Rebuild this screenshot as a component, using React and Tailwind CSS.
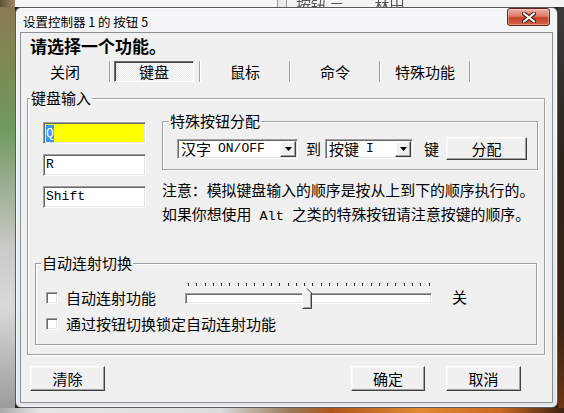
import React from 'react';

// classic 3D edges used by the dialog controls
const sunken =
  'border border-[#a0a0a0] border-r-white border-b-white shadow-[inset_1px_1px_0_#696969,inset_-1px_-1px_0_#e3e3e3]';
const raised =
  'border border-[#fff] border-r-[#404040] border-b-[#404040] shadow-[inset_-1px_-1px_0_#a0a0a0,inset_1px_1px_0_#f8f8f8]';
const etched = 'border border-[#a0a0a0] shadow-[inset_1px_1px_0_#fff,1px_1px_0_#fff]';
const mono = "font-['Liberation_Mono',monospace]";

const Separator = () => (
  <div className="w-[2px] h-[21px] border-l border-l-[#a0a0a0] border-r border-r-white" />
);

const Tab = ({ children }) => (
  <div className="w-[88px] h-[21px] flex items-center justify-center text-[15px] leading-[16px]">
    {children}
  </div>
);

const Combo = ({ className, children }) => (
  <div className={`${sunken} ${className} h-[20px] bg-white flex items-stretch p-[1px]`}>
    <div className="flex-1 flex items-center pl-[2px] whitespace-nowrap text-[15px] leading-[16px]">
      {children}
    </div>
    <div className={`${raised} w-[16px] bg-[#f0f0f0] flex items-center justify-center`}>
      <svg width="7" height="4" viewBox="0 0 7 4">
        <path d="M0 0h7L3.5 4z" fill="#000" />
      </svg>
    </div>
  </div>
);

const Button = ({ className, children }) => (
  <div
    className={`${raised} ${className} bg-[#f0f0f0] flex items-center justify-center text-[15px] leading-[16px]`}
  >
    {children}
  </div>
);

const Field = ({ className, children }) => (
  <div className={`${sunken} ${className} w-[103px] h-[22px] flex items-center px-[2px] ${mono} text-[13px]`}>
    {children}
  </div>
);

const Check = () => <div className={`${sunken} w-[12px] h-[12px] bg-white shrink-0`} />;

const Slider = () => {
  const ticks = Array.from({ length: 30 });
  return (
    <div className="relative w-[247px] h-[26px]">
      <div className="flex items-start justify-between pl-[3px] pr-[2px] h-[4px]">
        {ticks.map((_, i) => (
          <div key={i} className="w-[1px] h-[3px] bg-[#303030]" />
        ))}
      </div>
      <div className={`${sunken} mt-[6px] w-[247px] h-[11px] bg-white`} />
      <svg width="10" height="21" viewBox="0 0 10 21" className="absolute left-[117px] top-[5px]">
        <path d="M0.5 20.5V5L5 0.5 9.5 5v15.5z" fill="#f0f0f0" />
        <path d="M0.5 20V5L5 0.5" stroke="#fff" fill="none" />
        <path d="M5 0.5 9.5 5V20.5H0.5" stroke="#404040" fill="none" />
        <path d="M8.5 5.5V19.5H1.5" stroke="#a0a0a0" fill="none" />
      </svg>
    </div>
  );
};

const CloseButton = () => (
  <div className="w-[43px] h-[18px] rounded-[3px] border border-[#6b1e14] bg-[linear-gradient(180deg,#eab1a5_0%,#dc7a66_45%,#c6412b_55%,#d3654a_100%)] shadow-[inset_0_0_0_1px_rgba(255,255,255,0.35)] flex items-center justify-center">
    <svg width="14" height="11" viewBox="0 0 14 11">
      <path d="M2 1.5l10 8M12 1.5l-10 8" stroke="#4a1a10" strokeWidth="4.2" strokeLinecap="round" />
      <path d="M2 1.5l10 8M12 1.5l-10 8" stroke="#fff" strokeWidth="2.2" strokeLinecap="round" />
    </svg>
  </div>
);

export default function App() {
  return (
    <div className="w-[564px] h-[413px] overflow-hidden bg-[#2a1f17] font-['Noto_Sans_CJK_SC',sans-serif] text-black">
      {/* window behind, seen above the dialog */}
      <div className="h-[7px] overflow-hidden flex bg-[#f4f4f4]">
        <div className="w-[15px] bg-[linear-gradient(90deg,#5e5236,#9c8b62)]" />
        <div className="w-[262px] bg-[#f5f5f5]" />
        <div className="w-[1px] bg-[#9a9a9a]" />
        <div className="w-[8px] bg-[#e9e9e9]" />
        <div className="w-[1px] bg-[#9a9a9a]" />
        <div className="flex-1 flex text-[15px] leading-[16px] -mt-[3px] text-[#555] blur-[0.6px]">
          <span className="ml-[9px]">按钮 ＝</span>
          <span className="ml-[30px]">林田</span>
        </div>
      </div>

      <div className="flex h-[401px]">
        <div className="w-[15px] bg-[linear-gradient(180deg,#8a7a52_0%,#7d8a55_15%,#6f9a5c_30%,#9cae93_45%,#c9cbc6_60%,#d9d9d9_75%,#9c9c9c_100%)]" />

        {/* dialog window */}
        <div className="w-[543px] h-[401px] rounded-[6px] border border-[#56595d] bg-[linear-gradient(180deg,#f3f5f7_0%,#e8ecef_60%,#e2e6ea_100%)] shadow-[inset_0_0_0_1px_rgba(255,255,255,0.7)] flex flex-col">
          <div className="h-[25px] flex items-start pl-[7px] pr-[7px]">
            <span className="mt-[6px] text-[12.5px] leading-[16px]">设置控制器 1 的 按钮 5</span>
            <div className="ml-auto">
              <CloseButton />
            </div>
          </div>

          <div className="mx-[5px] h-[369px] bg-[#f0f0f0] shadow-[0_0_0_1px_#8c9196] flex flex-col">
            <div className="mt-[4px] ml-[9px] text-[17px] leading-[17px] font-bold">请选择一个功能。</div>

            <div className="mt-[7px] flex items-center h-[21px]">
              <Tab>关闭</Tab>
              <Separator />
              <div className="w-[88px] h-[21px] pl-[3px]">
                <div className="w-[80px] h-[21px] border border-[#6d6d6d] border-r-white border-b-white shadow-[inset_1px_1px_0_#404040] bg-[repeating-conic-gradient(#ffffff_0%_25%,#e6e6e6_0%_50%)] bg-[length:2px_2px] flex items-center justify-center text-[15px] leading-[16px]">
                  键盘
                </div>
              </div>
              <Separator />
              <Tab>鼠标</Tab>
              <Separator />
              <Tab>命令</Tab>
              <Separator />
              <Tab>特殊功能</Tab>
              <Separator />
            </div>

            <fieldset className={`mt-[8px] ml-[6px] w-[518px] ${etched} pb-[9px]`}>
              <legend className="ml-[2px] px-[1px] bg-[#f0f0f0] text-[15px] leading-[16px]">键盘输入</legend>

              <div className="pt-[7px] flex items-start">
                <div className="ml-[15px] mt-[9px] flex flex-col gap-[10px]">
                  <Field className="bg-[#ffff00]">
                    <span className="bg-[#3399ff] text-white leading-[17px]">Q</span>
                  </Field>
                  <Field className="bg-white">R</Field>
                  <Field className="bg-white">Shift</Field>
                </div>

                <div className="ml-[16px] w-[376px] flex flex-col">
                  <fieldset className={`${etched} pb-[9px]`}>
                    <legend className="ml-[6px] px-[1px] bg-[#f0f0f0] text-[15px] leading-[16px]">特殊按钮分配</legend>
                    <div className="pt-[8px] pl-[14px] flex items-center h-[31px]">
                      <Combo className="w-[121px]">
                        汉字<span className={`${mono} text-[13px] ml-[7px]`}>ON/OFF</span>
                      </Combo>
                      <span className="ml-[8px] text-[15px] leading-[16px]">到</span>
                      <Combo className="ml-[4px] w-[88px]">
                        按键<span className={`${mono} text-[13px] ml-[7px]`}>I</span>
                      </Combo>
                      <span className="ml-[11px] text-[15px] leading-[16px]">键</span>
                      <Button className="ml-[7px] w-[81px] h-[23px]">分配</Button>
                    </div>
                  </fieldset>

                  <div className="mt-[8px] text-[14.9px] leading-[24px] whitespace-nowrap">
                    <div>注意：模拟键盘输入的顺序是按从上到下的顺序执行的。</div>
                    <div>
                      如果你想使用<span className={`${mono} text-[13.5px]`}> Alt </span>之类的特殊按钮请注意按键的顺序。
                    </div>
                  </div>
                </div>
              </div>

              <fieldset className={`mt-[26px] ml-[7px] w-[502px] ${etched} pb-[12px]`}>
                <legend className="ml-[5px] px-[1px] bg-[#f0f0f0] text-[15px] leading-[16px]">自动连射切换</legend>

                <div className="pt-[12px] flex items-start">
                  <div className="ml-[10px] mt-[9px]">
                    <Check />
                  </div>
                  <span className="ml-[8px] mt-[7px] w-[119px] text-[15px] leading-[16px]">自动连射功能</span>
                  <Slider />
                  <span className="ml-[20px] mt-[6px] text-[15px] leading-[16px]">关</span>
                </div>

                <div className="mt-[7px] h-[16px] flex items-center">
                  <div className="ml-[10px]">
                    <Check />
                  </div>
                  <span className="ml-[8px] text-[15px] leading-[16px]">通过按钮切换锁定自动连射功能</span>
                </div>
              </fieldset>
            </fieldset>

            <div className="mt-[11px] flex items-center pl-[9px] pr-[31px]">
              <Button className="w-[75px] h-[25px]">清除</Button>
              <Button className="ml-auto w-[74px] h-[25px]">确定</Button>
              <Button className="ml-[21px] w-[75px] h-[25px]">取消</Button>
            </div>
          </div>
        </div>

        <div className="flex-1 bg-[linear-gradient(180deg,#3a3a3a_0%,#2b2219_40%,#3a2414_80%,#6a3614_100%)]" />
      </div>

      <div className="h-[5px] bg-[linear-gradient(90deg,#a9a9a9_0px,#e6e6e6_40px,#dcdcdc_220px,#9a7a5a_290px,#b0561c_330px,#e08a30_420px,#c96a20_500px,#3a2010_564px)]" />
    </div>
  );
}
